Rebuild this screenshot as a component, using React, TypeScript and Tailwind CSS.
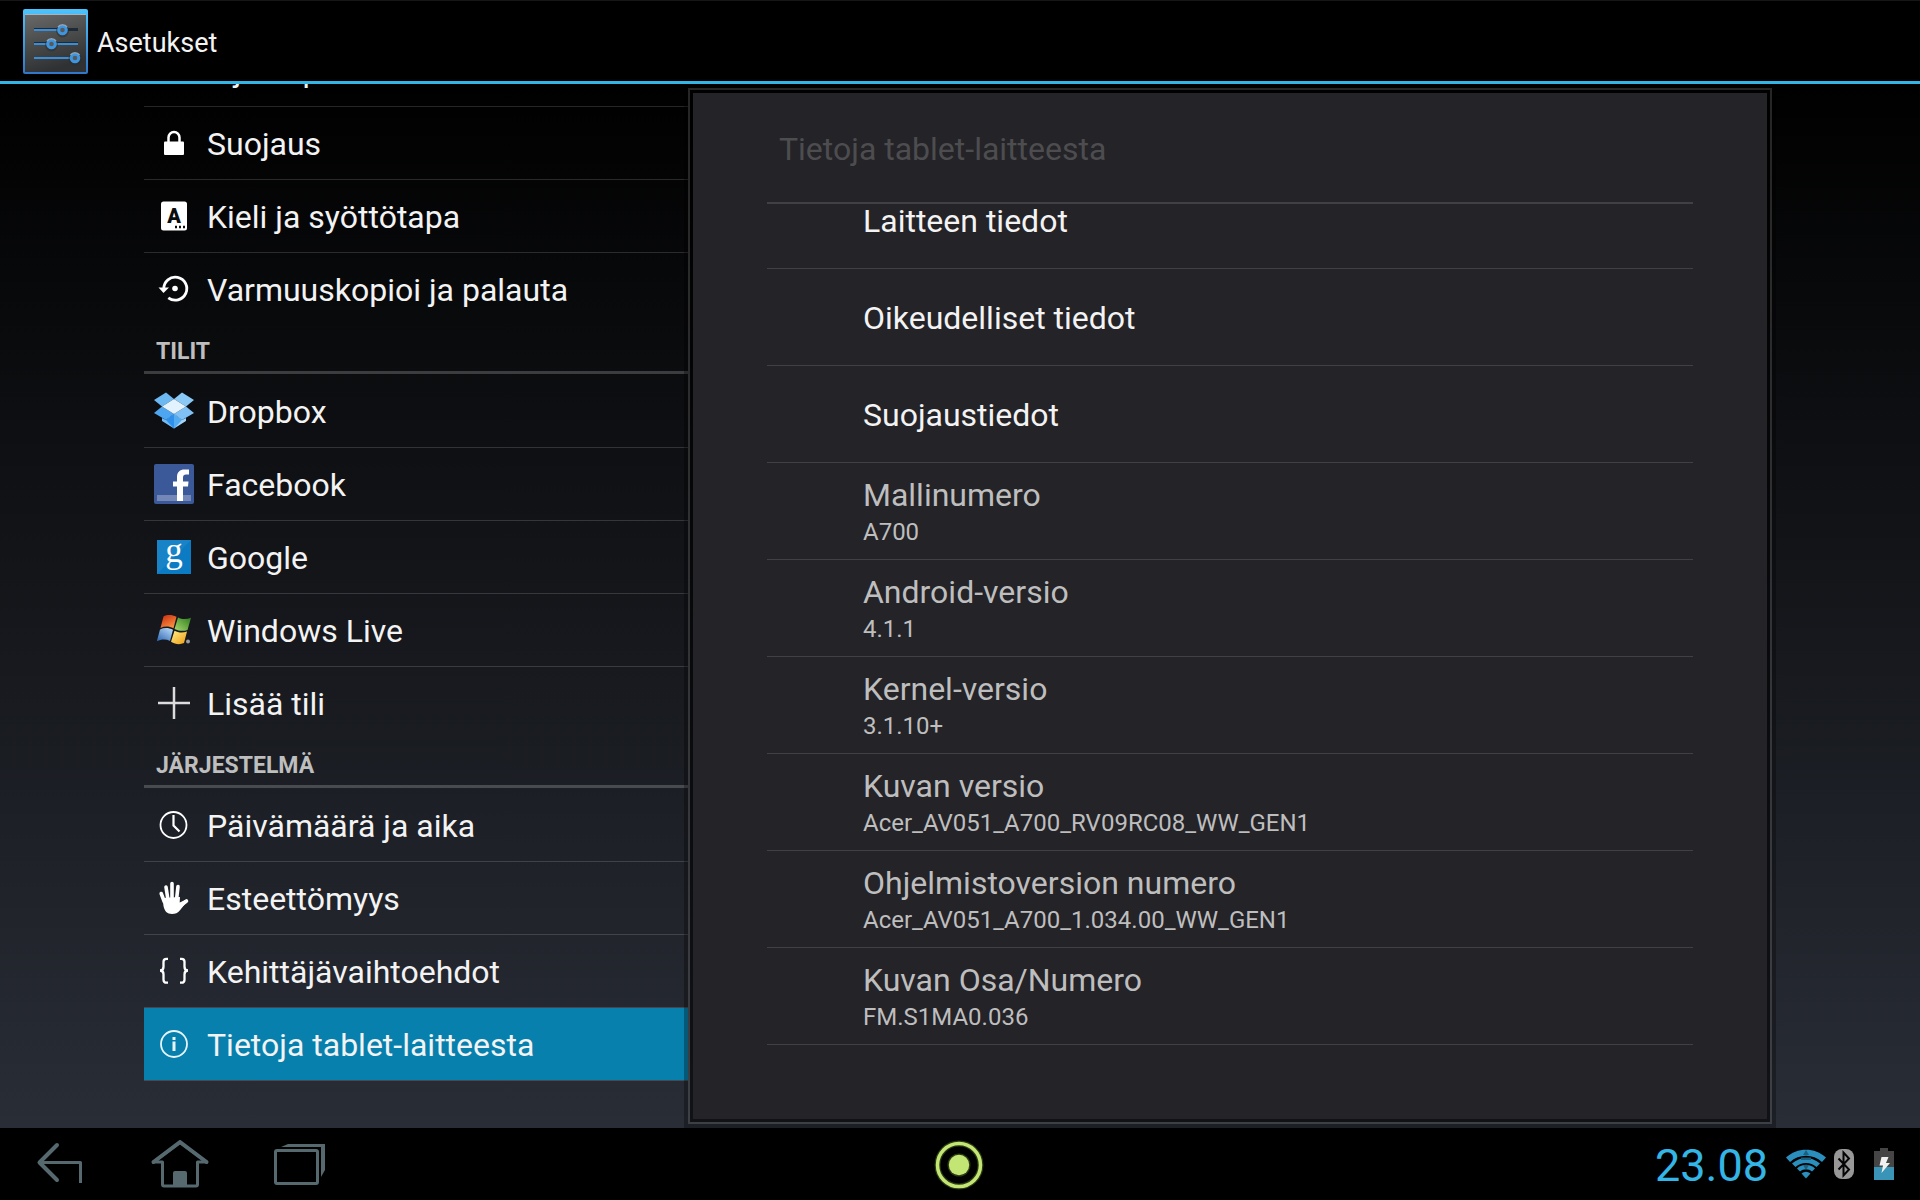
import clsx from "clsx";
import type { ReactNode } from "react";

interface NavItem {
  label: string;
  icon: ReactNode;
  active?: boolean;
}

interface Section {
  title?: string;
  items: NavItem[];
}

interface InfoItem {
  title: string;
  summary?: string;
}

const SettingsLogo = () => (
  <svg width="65" height="65" viewBox="0 0 65 65" fill="none" aria-hidden="true">
    <defs>
      <linearGradient id="plate" x1="0" y1="0" x2="0.3" y2="1">
        <stop offset="0" stopColor="#6a6a6a" />
        <stop offset="0.5" stopColor="#4b4c4c" />
        <stop offset="1" stopColor="#303132" />
      </linearGradient>
      <linearGradient id="rim" x1="0" y1="0" x2="0" y2="1">
        <stop offset="0" stopColor="#4cc3fb" />
        <stop offset="1" stopColor="#2f77c9" />
      </linearGradient>
    </defs>
    <rect width="65" height="65" rx="2" fill="url(#rim)" />
    <rect x="2" y="5" width="61" height="58" fill="url(#plate)" />
    <path d="M2 5.5h61" stroke="#a8b4bd" />
    <path d="M11 20.5h44M11 34.5h44" stroke="#1d2b38" strokeWidth="3" />
    <path d="M11 21h24M11 35h44M11 49h37" stroke="#3a8ed8" strokeWidth="2" />
    <g fill="#4c4f52" stroke="#2b2c2d" strokeWidth="6" opacity="0.5">
      <circle cx="39.500" cy="22" r="3.500" />
      <circle cx="28.500" cy="36" r="3.500" />
      <circle cx="52" cy="50" r="3.500" />
    </g>
    <g fill="#57595b" stroke="#3d96e0" strokeWidth="3">
      <circle cx="39.500" cy="21" r="3.800" />
      <circle cx="28.500" cy="35" r="3.800" />
      <circle cx="52" cy="49" r="3.800" />
    </g>
    <g stroke="#8ea4b8" strokeWidth="1.500">
      <path d="M35 18a5.500 5.500 0 0 1 9 0M24 32a5.500 5.500 0 0 1 9 0M47.500 46a5.500 5.500 0 0 1 9 0" />
    </g>
  </svg>
);

const LocationIcon = () => (
  <svg width="40" height="40" viewBox="0 0 40 40" fill="none" aria-hidden="true">
    <circle cx="20" cy="20" r="9" stroke="#fff" strokeWidth="2" />
    <path d="M20 6v8M20 26v8M6 20h8M26 20h8" stroke="#fff" strokeWidth="2" />
  </svg>
);

const LockIcon = () => (
  <svg width="40" height="40" viewBox="0 0 40 40" fill="none" aria-hidden="true">
    <rect x="10" y="18.500" width="20" height="13.500" rx="1" fill="#fff" />
    <path d="M14.500 19v-4.500a5.500 5.500 0 0 1 11 0V19" stroke="#fff" strokeWidth="2.500" />
  </svg>
);

const LanguageIcon = () => (
  <svg width="40" height="40" viewBox="0 0 40 40" aria-hidden="true">
    <rect x="7" y="5.500" width="26" height="29" rx="2.500" fill="#fff" />
    <text x="20" y="27" textAnchor="middle" className="font-['Roboto',sans-serif] text-[20px] font-black" fill="#0b0c0d">
      A
    </text>
    <path d="M21 31h2M25 31h2M29 31h2" stroke="#0b0c0d" strokeWidth="2.500" />
  </svg>
);

const BackupIcon = () => (
  <svg width="40" height="40" viewBox="0 0 40 40" fill="none" aria-hidden="true">
    <path d="M9.800 20a11.500 11.500 0 1 1 4.500 8.800" stroke="#fff" strokeWidth="2.800" />
    <path d="M4.500 18.500h10.500L9.500 24z" fill="#fff" />
    <circle cx="21" cy="19.500" r="2.800" fill="#fff" />
  </svg>
);

const DropboxIcon = () => (
  <svg width="40" height="40" viewBox="0 0 40 40" aria-hidden="true">
    <path d="M12 1.500 20 8 8 15.500 0 9z" fill="#6cb8f3" />
    <path d="M28 1.500 40 9 32 15.500 20 8z" fill="#8ac8f6" />
    <path d="M8 15.500 20 23 12 29 0 22z" fill="#4ea6f0" />
    <path d="M32 15.500 40 22 28 29 20 23z" fill="#7fc1f5" />
    <path d="M20 8 32 15.500 20 23 8 15.500z" fill="#e3f3fe" />
    <path d="M20 23v14.500L8 30v-3l4 2z" fill="#72bcf6" />
    <path d="M20 23v14.500L32 30v-3l-4 2z" fill="#a2d4fa" />
    <path d="M20 23 12 29l8 8.500z" fill="#2e90ea" />
    <path d="M20 23l8 6-8 8.500z" fill="#55abf0" />
  </svg>
);

const FacebookIcon = () => (
  <svg width="40" height="40" viewBox="0 0 40 40" aria-hidden="true">
    <rect width="40" height="40" rx="2" fill="#3b5998" />
    <rect x="3" y="31" width="34" height="6" fill="#7388b6" />
    <path d="M23 37V22.500h-4v-5h4V13c0-5 3-7.500 7.500-7.500H35v5h-3c-2 0-3 1-3 3v4h5.500l-.5 5h-5V37z" fill="#fff" />
  </svg>
);

const GoogleIcon = () => (
  <svg width="40" height="40" viewBox="0 0 40 40" className="overflow-visible" aria-hidden="true">
    <rect x="3" y="3" width="34" height="34" fill="#0b7cc4" />
    <path d="M3 3h34L3 37z" fill="#fff" opacity="0.060" />
    <text x="20" y="25" textAnchor="middle" className="font-['Liberation_Serif',serif] text-[35px]" fill="#fff">
      g
    </text>
  </svg>
);

const WindowsIcon = () => (
  <svg width="40" height="40" viewBox="0 0 40 40" aria-hidden="true">
    <defs>
      <linearGradient id="winRed" x1="0" y1="0" x2="0.6" y2="1">
        <stop offset="0" stopColor="#c9280f" />
        <stop offset="1" stopColor="#f9913f" />
      </linearGradient>
      <linearGradient id="winGreen" x1="1" y1="0" x2="0" y2="1">
        <stop offset="0" stopColor="#2f7d1f" />
        <stop offset="1" stopColor="#a6d86b" />
      </linearGradient>
      <linearGradient id="winBlue" x1="0.8" y1="0" x2="0" y2="1">
        <stop offset="0" stopColor="#b2d5f5" />
        <stop offset="1" stopColor="#2a62b0" />
      </linearGradient>
      <linearGradient id="winYellow" x1="0" y1="0" x2="1" y2="1">
        <stop offset="0" stopColor="#fff08a" />
        <stop offset="1" stopColor="#ee9a10" />
      </linearGradient>
    </defs>
    <path d="M9.500 6.500C13 4.500 18 4.500 22.500 6.800L19.500 18.300C15 16 10.500 16 6.500 18z" fill="url(#winRed)" />
    <path d="M24 7.500c4 2 8.500 2 13 .3L33.500 20c-4.500 1.500-8.500 1-13-1z" fill="url(#winGreen)" />
    <path d="M6 19.500c4-2 8.500-2 13 .3L16 31c-4-2-8.500-2-13.200.3z" fill="url(#winBlue)" />
    <path d="M20.500 20.700c4 2 8 2.300 12.500.8L30 33c-4 1.800-8.500 1.500-13-1.200z" fill="url(#winYellow)" />
    <circle cx="34" cy="31.500" r="2" fill="#9a9da0" />
  </svg>
);

const PlusIcon = () => (
  <svg width="40" height="40" viewBox="0 0 40 40" aria-hidden="true">
    <path d="M20 4v32M4 20h32" stroke="#dcdcdc" strokeWidth="2.500" />
  </svg>
);

const ClockIcon = () => (
  <svg width="40" height="40" viewBox="0 0 40 40" fill="none" aria-hidden="true">
    <circle cx="19.500" cy="20" r="13" stroke="#fff" strokeWidth="1.800" />
    <path d="M19.500 10v10.500l6 6" stroke="#fff" strokeWidth="2.200" />
  </svg>
);

const HandIcon = () => (
  <svg width="40" height="40" viewBox="0 0 40 40" fill="none" aria-hidden="true">
    <g stroke="#fff" strokeWidth="3.600" strokeLinecap="round">
      <path d="M7.200 15.500l3 8M12 9l2 13M18 5.500V22M24 8.500L22.500 22M32.500 23L26 28" />
    </g>
    <path d="M8.500 20l17.500-1-.3 5.500 5.500-2.500c1.500 1 1.500 2 .5 3l-5.500 7c-2.500 3-5 4-8.200 4-5 0-7.500-3-8.500-8z" fill="#fff" />
  </svg>
);

const BracesIcon = () => (
  <svg width="40" height="40" viewBox="0 0 40 40" fill="none" aria-hidden="true">
    <path
      d="M14 7.800h-1.500c-2 0-3 1-3 3v5c0 2.500-1 3.700-3.500 3.700 2.500 0 3.500 1.200 3.500 3.700v5.500c0 2 1 3 3 3H14M26 7.800h1.500c2 0 3 1 3 3v5c0 2.500 1 3.700 3.500 3.700-2.500 0-3.500 1.200-3.500 3.700v5.500c0 2-1 3-3 3H26"
      stroke="#fff"
      strokeWidth="2.300"
    />
  </svg>
);

const InfoIcon = () => (
  <svg width="40" height="40" viewBox="0 0 40 40" fill="none" aria-hidden="true">
    <circle cx="20" cy="20" r="13" stroke="#e8f4fa" strokeWidth="1.800" />
    <path d="M20 17.500V27M20 13v3" stroke="#e8f4fa" strokeWidth="3" />
  </svg>
);

const BackIcon = () => (
  <svg width="60" height="60" viewBox="0 0 60 60" fill="none" stroke="#56696f" aria-hidden="true">
    <path d="M27 11 9.500 28.500 27 46" strokeWidth="4" strokeLinecap="round" strokeLinejoin="round" />
    <path d="M10 28.500h40.500V49" strokeWidth="3" strokeLinejoin="round" />
  </svg>
);

const HomeIcon = () => (
  <svg width="60" height="60" viewBox="0 0 60 60" fill="none" aria-hidden="true">
    <path
      d="M30 8.500 3.500 28h9v22.500q0 1.500 1.500 1.500h32q1.500 0 1.500-1.500V28h9z"
      stroke="#56696f"
      strokeWidth="3"
      strokeLinejoin="round"
    />
    <path d="M30 8 3.500 28M30 8 56.500 28" stroke="#56696f" strokeWidth="4" strokeLinecap="round" />
    <path d="M23 51V39q0-2 2-2h10q2 0 2 2v12z" fill="#56696f" />
  </svg>
);

const RecentIcon = () => (
  <svg width="60" height="60" viewBox="0 0 60 60" fill="none" aria-hidden="true">
    <rect x="5.500" y="16.500" width="42" height="33" rx="1.500" stroke="#56696f" strokeWidth="3" />
    <path d="M11 13l7-3h37v26l-4 7V13z" fill="#56696f" />
  </svg>
);

const ShortcutIcon = () => (
  <svg width="60" height="60" viewBox="0 0 60 60" fill="none" aria-hidden="true">
    <circle cx="29" cy="31" r="21.500" stroke="#8fbf3f" strokeWidth="6" opacity="0.300" />
    <circle cx="29" cy="31" r="21.500" stroke="#c3e573" strokeWidth="3.500" />
    <circle cx="29" cy="31" r="11.500" fill="#8fbf3f" opacity="0.300" />
    <circle cx="29" cy="31" r="10.200" fill="#c3e573" />
  </svg>
);

const WifiIcon = () => (
  <svg width="40" height="30" viewBox="0 0 40 30" fill="none" aria-hidden="true">
    <path d="M0 8.500C11-2 29-2 40 8.500L36 13C27 4.500 13 4.500 4 13z" fill="#2a8fbd" />
    <path d="M6 14.500c8-7.500 20-7.500 28 0l-3.500 3.500c-6-5.500-15-5.500-21 0z" fill="#2a8fbd" />
    <path d="M11 19.500c5-5 13-5 18 0l-3 3c-3.500-3-8.500-3-12 0z" fill="#2a8fbd" />
    <path d="M15.500 24.500q4.500-3.500 9 0L20 29.500z" fill="#2a8fbd" />
    <path d="M20 1l3 5h-6zM15 8.500h10v2.500H15zM17 16h6l-3 5z" fill="#1b5f7f" />
  </svg>
);

const BluetoothIcon = () => (
  <svg width="20" height="30" viewBox="0 0 20 30" fill="none" aria-hidden="true">
    <rect width="20" height="30" rx="8" fill="#989898" />
    <path d="M4.500 9.500 15 20.500 9.500 26.500V3.500L15 9.500 4.500 20.500" stroke="#050505" strokeWidth="2" />
  </svg>
);

const BatteryIcon = () => (
  <svg width="20" height="32" viewBox="0 0 20 32" aria-hidden="true">
    <path d="M6 0h8v3h6v29H0V3h6z" fill="#454545" />
    <rect y="19" width="20" height="13" fill="#3a94b8" />
    <path d="M7.500 9h7l-2.500 6h4L7.500 25l1.500-7.500H5.500z" fill="#f1f1f1" />
  </svg>
);

const sections: Section[] = [
  {
    items: [
      { label: "Sijaintipalvelut", icon: <LocationIcon /> },
      { label: "Suojaus", icon: <LockIcon /> },
      { label: "Kieli ja syöttötapa", icon: <LanguageIcon /> },
      { label: "Varmuuskopioi ja palauta", icon: <BackupIcon /> },
    ],
  },
  {
    title: "TILIT",
    items: [
      { label: "Dropbox", icon: <DropboxIcon /> },
      { label: "Facebook", icon: <FacebookIcon /> },
      { label: "Google", icon: <GoogleIcon /> },
      { label: "Windows Live", icon: <WindowsIcon /> },
      { label: "Lisää tili", icon: <PlusIcon /> },
    ],
  },
  {
    title: "JÄRJESTELMÄ",
    items: [
      { label: "Päivämäärä ja aika", icon: <ClockIcon /> },
      { label: "Esteettömyys", icon: <HandIcon /> },
      { label: "Kehittäjävaihtoehdot", icon: <BracesIcon /> },
      { label: "Tietoja tablet-laitteesta", icon: <InfoIcon />, active: true },
    ],
  },
];

const deviceInfo: InfoItem[] = [
  { title: "Laitteen tiedot" },
  { title: "Oikeudelliset tiedot" },
  { title: "Suojaustiedot" },
  { title: "Mallinumero", summary: "A700" },
  { title: "Android-versio", summary: "4.1.1" },
  { title: "Kernel-versio", summary: "3.1.10+" },
  { title: "Kuvan versio", summary: "Acer_AV051_A700_RV09RC08_WW_GEN1" },
  { title: "Ohjelmistoversion numero", summary: "Acer_AV051_A700_1.034.00_WW_GEN1" },
  { title: "Kuvan Osa/Numero", summary: "FM.S1MA0.036" },
];

const Sidebar: React.FC = () => {
  return (
    <nav className="flex w-1/3 flex-col justify-end overflow-hidden pb-[47px]">
      {sections.map((section, i) => (
        <div key={i} className="shrink-0">
          {section.title && (
            <h2 className="mt-px flex h-12 items-center border-b-[3px] border-white/20 pl-3 pt-2 text-[23px] font-bold text-[#bebebe]">
              {section.title}
            </h2>
          )}
          <ul>
            {section.items.map((item, j) => (
              <li
                key={item.label}
                className={clsx("border-t", j === 0 ? "border-transparent" : "border-white/15")}
              >
                <a
                  href="#"
                  className={clsx(
                    "flex h-[72px] items-center gap-[13px] pl-[10px] text-[#f3f3f3]",
                    item.active && "bg-[#0780ad]"
                  )}
                >
                  {item.icon}
                  <span className="pt-0.5 text-[32px] leading-10">{item.label}</span>
                </a>
              </li>
            ))}
          </ul>
        </div>
      ))}
      <div className="h-px shrink-0 bg-white/15" />
    </nav>
  );
};

const DetailPanel: React.FC = () => {
  return (
    <section className="relative -ml-1 flex flex-1 bg-black/30 p-1">
      <div className="flex flex-1 border-2 border-white/15 bg-black/40 bg-clip-padding p-[3px]">
        <div className="flex flex-1 flex-col bg-[#242328] px-[74px]">
          <h1 className="flex h-[111px] shrink-0 items-center border-b-2 border-[#414144] pl-3 pt-0.5 text-[32px] text-[#4d4d4f]">
            Tietoja tablet-laitteesta
          </h1>
          <ul className="flex min-h-0 flex-1 flex-col justify-end overflow-hidden pb-[74px]">
            {deviceInfo.map((item) => (
              <li
                key={item.title}
                className="flex h-[97px] shrink-0 flex-col justify-center border-b border-[#414144] pl-24 pt-0.5"
              >
                <span
                  className={clsx("text-[32px] leading-10", item.summary ? "text-[#bebebe]" : "text-[#f3f3f3]")}
                >
                  {item.title}
                </span>
                {item.summary && (
                  <span className="text-2xl leading-[34px] text-[#bebebe]">{item.summary}</span>
                )}
              </li>
            ))}
          </ul>
        </div>
      </div>
    </section>
  );
};

const SystemBar: React.FC = () => {
  return (
    <footer className="grid h-[72px] shrink-0 grid-cols-[1fr_auto_1fr] items-center bg-black">
      <div className="flex items-center gap-[60px] pl-[30px]">
        <button aria-label="Takaisin">
          <BackIcon />
        </button>
        <button aria-label="Koti">
          <HomeIcon />
        </button>
        <button aria-label="Viimeisimmät">
          <RecentIcon />
        </button>
      </div>
      <button aria-label="Pikavalikko">
        <ShortcutIcon />
      </button>
      <div className="flex items-center justify-end pr-[26px]">
        <time className="mr-[18px] pt-1 text-[45px] leading-[68px] text-[#33b5e5]">23.08</time>
        <div className="flex items-center gap-2">
          <WifiIcon />
          <BluetoothIcon />
        </div>
        <div className="ml-5">
          <BatteryIcon />
        </div>
      </div>
    </footer>
  );
};

const App: React.FC = () => {
  return (
    <div className="flex h-screen flex-col overflow-hidden bg-black font-['Roboto',sans-serif]">
      <header className="flex h-[84px] shrink-0 items-center gap-[9px] border-b-[3px] border-t border-b-[#33b5e5] border-t-[#161616] pl-[23px]">
        <SettingsLogo />
        <span className="pt-1 text-[27px] text-[#f3f3f3]">Asetukset</span>
      </header>
      <main className="flex min-h-0 flex-1 bg-linear-to-b/srgb from-black to-[#292d36] px-[7.5%]">
        <Sidebar />
        <DetailPanel />
      </main>
      <SystemBar />
    </div>
  );
};

export default App;
